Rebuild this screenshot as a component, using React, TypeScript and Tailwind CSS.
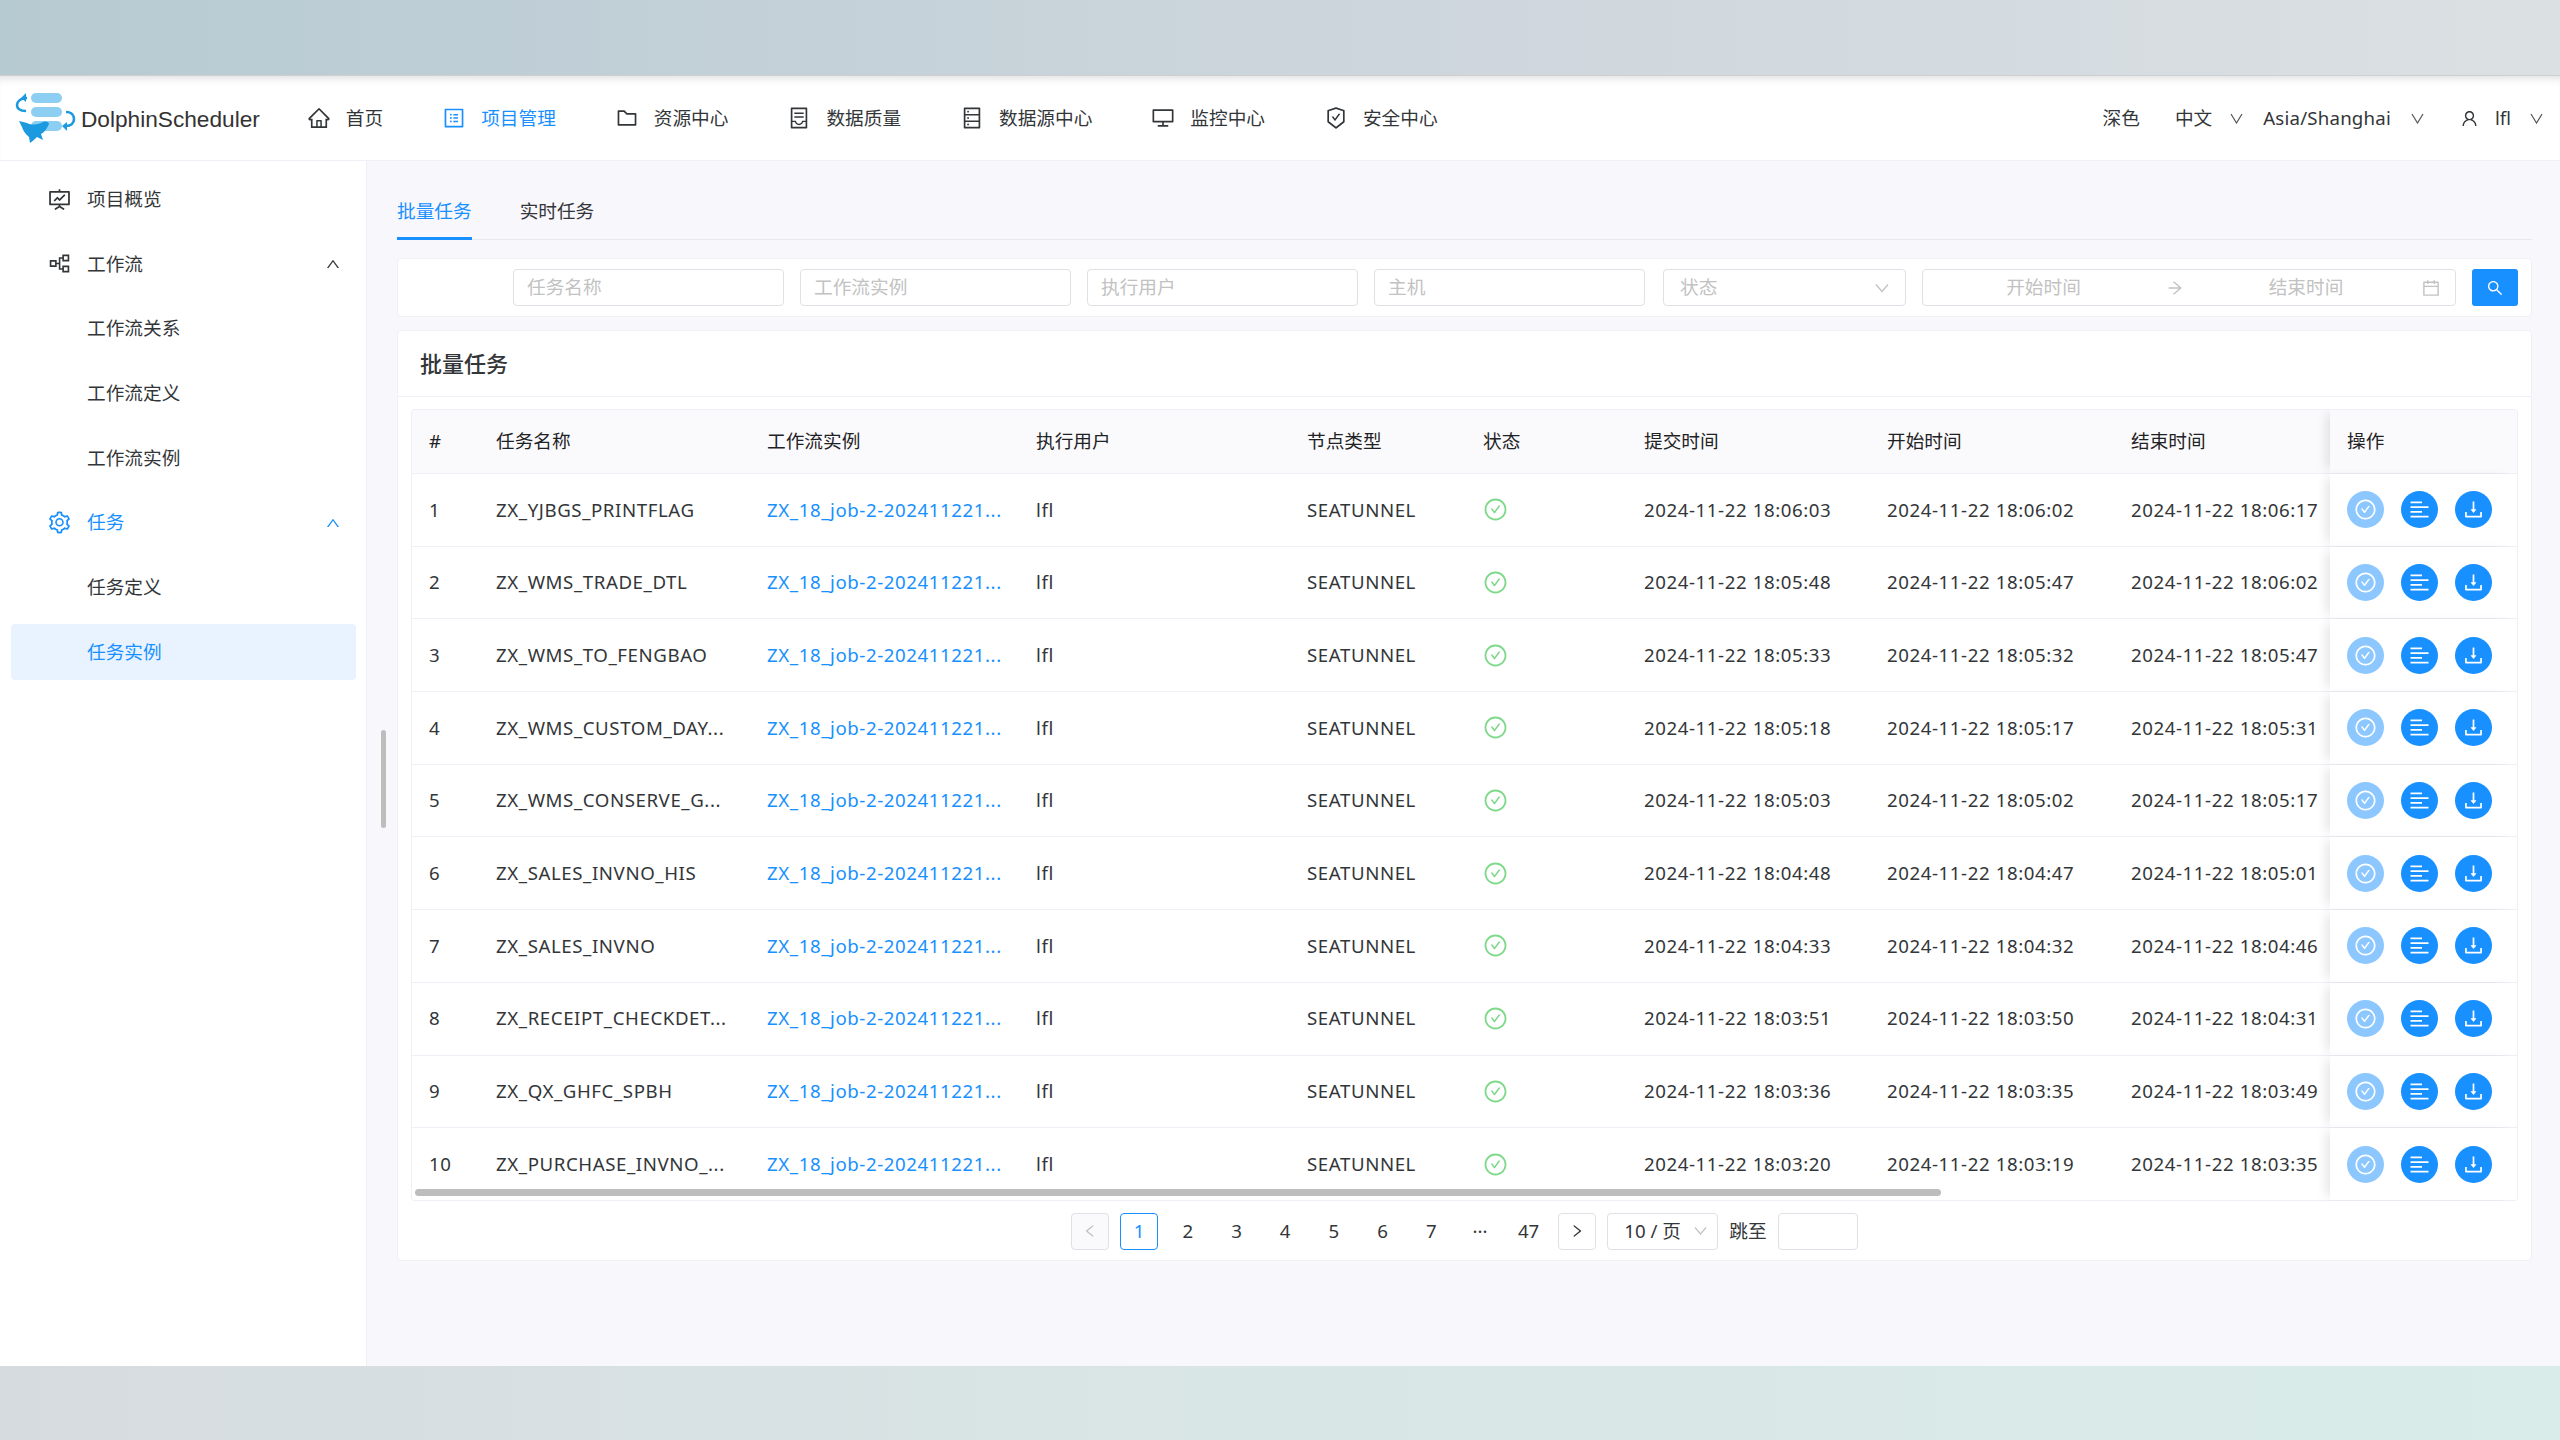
import type { ReactNode } from "react"
import {
  AiOutlineAlignLeft,
  AiOutlineArrowRight,
  AiOutlineCalendar,
  AiOutlineCheckCircle,
  AiOutlineContainer,
  AiOutlineDatabase,
  AiOutlineDesktop,
  AiOutlineDownload,
  AiOutlineFolder,
  AiOutlineFundProjectionScreen,
  AiOutlineHome,
  AiOutlineLeft,
  AiOutlinePartition,
  AiOutlineProfile,
  AiOutlineRight,
  AiOutlineSafetyCertificate,
  AiOutlineSearch,
  AiOutlineSetting,
  AiOutlineUp,
  AiOutlineUser,
} from "react-icons/ai"

const navItems = [
  { label: "首页", icon: <AiOutlineHome /> },
  { label: "项目管理", icon: <AiOutlineProfile />, active: true },
  { label: "资源中心", icon: <AiOutlineFolder /> },
  { label: "数据质量", icon: <AiOutlineContainer /> },
  { label: "数据源中心", icon: <AiOutlineDatabase /> },
  { label: "监控中心", icon: <AiOutlineDesktop /> },
  { label: "安全中心", icon: <AiOutlineSafetyCertificate /> },
]

const rows = [
  ["ZX_YJBGS_PRINTFLAG", "18:06:03", "18:06:02", "18:06:17"],
  ["ZX_WMS_TRADE_DTL", "18:05:48", "18:05:47", "18:06:02"],
  ["ZX_WMS_TO_FENGBAO", "18:05:33", "18:05:32", "18:05:47"],
  ["ZX_WMS_CUSTOM_DAY...", "18:05:18", "18:05:17", "18:05:31"],
  ["ZX_WMS_CONSERVE_G...", "18:05:03", "18:05:02", "18:05:17"],
  ["ZX_SALES_INVNO_HIS", "18:04:48", "18:04:47", "18:05:01"],
  ["ZX_SALES_INVNO", "18:04:33", "18:04:32", "18:04:46"],
  ["ZX_RECEIPT_CHECKDET...", "18:03:51", "18:03:50", "18:04:31"],
  ["ZX_QX_GHFC_SPBH", "18:03:36", "18:03:35", "18:03:49"],
  ["ZX_PURCHASE_INVNO_...", "18:03:20", "18:03:19", "18:03:35"],
]

const gridCols = "grid grid-cols-[67px_271px_269px_271px_176px_161px_243px_244px_216px_187px]"
const opShadow = "relative z-10 h-full pl-[17px] flex items-center shadow-[-8px_0_10px_-4px_rgba(0,0,0,0.1)]"

function Logo() {
  return (
    <svg width="64" height="54" viewBox="0 0 64 54" className="shrink-0">
      <rect x="17" y="2" width="31" height="10" rx="5" fill="#8ccff2" />
      <rect x="17" y="16" width="31" height="10" rx="5" fill="#8ccff2" />
      <rect x="17" y="30" width="31" height="10" rx="5" fill="#8ccff2" />
      <path d="M13 7 C6 7 3 11 3 14 C3 18 6 20 12 20" fill="none" stroke="#1b9ae0" strokeWidth="2.6" />
      <path d="M12 2 L7 7 L12 11 Z" fill="#1b9ae0" />
      <path d="M52 21 C58 21 60 25 60 28 C60 32 57 35 52 35" fill="none" stroke="#1b9ae0" strokeWidth="2.6" />
      <path d="M53 31 L48 35 L53 40 Z" fill="#1b9ae0" />
      <path
        d="M5 30 L13 32 C19 35 25 33 29 31 C32 30 35 31 35 33 C33 37 31 41 27 43 L29 49 L23 46 C21 48 19 50 16 52 L15 46 C11 43 9 39 8 36 Z"
        fill="#1b9ae0"
      />
    </svg>
  )
}

function Caret() {
  return (
    <svg width="13" height="11" viewBox="0 0 13 11" className="shrink-0">
      <path d="M1 1 L6.5 10 L12 1" fill="none" stroke="#555" strokeWidth="1.2" />
    </svg>
  )
}

function SideItem({ label, icon, open, active, blue }: { label: string; icon?: ReactNode; open?: boolean; active?: boolean; blue?: boolean }) {
  return (
    <div className={`ml-[11px] mr-[10px] flex h-[56.67px] items-center rounded-[4px] pl-[36px] pr-[16px] ${active ? "bg-[#e8f3ff]" : ""} ${active || blue ? "text-[#1890ff]" : "text-[#333639]"}`}>
      <span className="flex w-[40px] items-center text-[25px]">{icon}</span>
      <span>{label}</span>
      {open && <AiOutlineUp className={`ml-auto mr-[-1px] text-[16px] ${blue ? "text-[#1890ff]" : "text-[#333639]"}`} />}
    </div>
  )
}

function FilterInput({ text, className }: { text: string; className: string }) {
  return (
    <div className={`flex h-[37px] items-center rounded-[4px] border border-[#e0e0e6] px-[13px] text-[#c2c2c2] ${className}`}>{text}</div>
  )
}

function RoundButton({ children, light }: { children: ReactNode; light?: boolean }) {
  return (
    <span className={`flex h-[37px] w-[37px] items-center justify-center rounded-full text-[23px] text-white ${light ? "bg-[#8cc8ff]" : "bg-[#1890ff]"}`}>
      {children}
    </span>
  )
}

function PageBox({ children, className = "" }: { children: ReactNode; className?: string }) {
  return <div className={`flex h-[37px] w-[38px] items-center justify-center rounded-[4px] ${className}`}>{children}</div>
}

export default function App() {
  return (
    <div className="flex h-[1440px] w-[2560px] flex-col overflow-hidden bg-white font-['Noto_Sans','Noto_Sans_CJK_SC',sans-serif] text-[18.67px] leading-none text-[#333639]">
      <div className="h-[75px] shrink-0 bg-gradient-to-r from-[#b6cad2] via-[#ccd5dc] to-[#dbe0e3]" />

      <header className="flex h-[86px] shrink-0 items-center border-t border-b border-t-[#cfcfcf] border-b-[#efeff5] bg-white pl-[14px] pr-[17px] shadow-[inset_0_8px_8px_-6px_rgba(0,0,0,0.14)]">
        <Logo />
        <span className="ml-[3px] mt-[3px] font-['Liberation_Sans',sans-serif] text-[22.67px] text-[#333]">DolphinScheduler</span>
        <nav className="ml-[47px] flex items-center gap-[59px]">
          {navItems.map((item) => (
            <div key={item.label} className={`flex items-center gap-[15px] ${item.active ? "text-[#1890ff]" : ""}`}>
              <span className="text-[24px]">{item.icon}</span>
              <span>{item.label}</span>
            </div>
          ))}
        </nav>
        <div className="ml-auto flex items-center">
          <span>深色</span>
          <span className="ml-[35px]">中文</span>
          <span className="ml-[18px]"><Caret /></span>
          <span className="ml-[20px] tracking-[0.2px]">Asia/Shanghai</span>
          <span className="ml-[20px]"><Caret /></span>
          <AiOutlineUser className="ml-[36px] text-[19px]" />
          <span className="ml-[16px]">lfl</span>
          <span className="ml-[19px]"><Caret /></span>
        </div>
      </header>

      <div className="flex min-h-0 flex-1">
        <aside className="flex w-[367px] shrink-0 flex-col gap-[8px] border-r border-[#efeff5] bg-white pt-[10px]">
          <SideItem label="项目概览" icon={<AiOutlineFundProjectionScreen />} />
          <SideItem label="工作流" icon={<AiOutlinePartition />} open />
          <SideItem label="工作流关系" />
          <SideItem label="工作流定义" />
          <SideItem label="工作流实例" />
          <SideItem label="任务" icon={<AiOutlineSetting />} open blue />
          <SideItem label="任务定义" />
          <SideItem label="任务实例" active />
        </aside>

        <main className="relative min-w-0 flex-1 bg-[#f8f7fc] pl-[30px] pr-[28px]">
          <div className="absolute left-[14px] top-[569px] h-[98px] w-[5px] rounded-full bg-[#bdbdbd]" />

          <div className="mt-[31px] flex h-[48px] gap-[48px] border-b border-[#e8e8ee]">
            <div className="h-[48px] border-b-[3px] border-[#1890ff] pt-[10px] text-[#1890ff]">批量任务</div>
            <div className="pt-[10px]">实时任务</div>
          </div>

          <div className="mt-[18px] flex h-[59px] items-center justify-end gap-[16px] rounded-[4px] border border-[#f0f0f5] bg-white pr-[13px]">
            <FilterInput text="任务名称" className="w-[271px]" />
            <FilterInput text="工作流实例" className="w-[271px]" />
            <FilterInput text="执行用户" className="w-[271px]" />
            <FilterInput text="主机" className="mr-[2px] w-[271px]" />
            <div className="flex h-[37px] w-[243px] items-center justify-between rounded-[4px] border border-[#e0e0e6] px-[16px] text-[#c2c2c2]">
              <span>状态</span>
              <svg width="14" height="10" viewBox="0 0 14 10">
                <path d="M1 1.5 L7 8.5 L13 1.5" fill="none" stroke="#c2c2c2" strokeWidth="1.3" />
              </svg>
            </div>
            <div className="flex h-[37px] w-[534px] items-center rounded-[4px] border border-[#e0e0e6] text-[#c2c2c2]">
              <span className="w-[241px] text-center">开始时间</span>
              <AiOutlineArrowRight className="w-[22px] text-[18px]" />
              <span className="w-[240px] text-center">结束时间</span>
              <AiOutlineCalendar className="ml-[-5px] text-[20px]" />
            </div>
            <div className="flex h-[37px] w-[46px] items-center justify-center rounded-[3px] bg-[#1890ff] text-[18px] text-white">
              <AiOutlineSearch />
            </div>
          </div>

          <section className="mt-[13px] h-[931px] rounded-[4px] border border-[#f0f0f5] bg-white">
            <h2 className="flex h-[66px] items-center border-b border-[#efeff5] pb-[2px] pl-[22px] text-[22px] font-medium">批量任务</h2>

            <div className="relative mx-[13px] mt-[12px] overflow-hidden rounded-[4px] border-x border-t border-[#efeff5]">
              <div className={`${gridCols} h-[64px] items-center border-b border-[#efeff5] bg-[#fafafc] text-[#1f2225]`}>
                <span className="pl-[17px]">#</span>
                <span className="pl-[17px]">任务名称</span>
                <span className="pl-[17px]">工作流实例</span>
                <span className="pl-[17px]">执行用户</span>
                <span className="pl-[17px]">节点类型</span>
                <span className="pl-[17px]">状态</span>
                <span className="pl-[17px]">提交时间</span>
                <span className="pl-[17px]">开始时间</span>
                <span className="pl-[17px]">结束时间</span>
                <span className={`${opShadow} bg-[#fafafc]`}>操作</span>
              </div>

              {rows.map((row, i) => (
                <div key={row[0]} className={`${gridCols} h-[72.7px] items-center border-b border-[#efeff5] bg-white tracking-[0.58px]`}>
                  <span className="pl-[17px]">{i + 1}</span>
                  <span className="pl-[17px]">{row[0]}</span>
                  <span className="pl-[17px] text-[#1890ff]">ZX_18_job-2-202411221...</span>
                  <span className="pl-[17px]">lfl</span>
                  <span className="pl-[17px]">SEATUNNEL</span>
                  <span className="pl-[17px]"><AiOutlineCheckCircle className="text-[25px] text-[#7fd98a]" /></span>
                  <span className="pl-[17px]">2024-11-22 {row[1]}</span>
                  <span className="pl-[17px]">2024-11-22 {row[2]}</span>
                  <span className="pl-[17px]">2024-11-22 {row[3]}</span>
                  <div className={`${opShadow} gap-[17px] bg-white`}>
                    <RoundButton light><AiOutlineCheckCircle /></RoundButton>
                    <RoundButton><AiOutlineAlignLeft /></RoundButton>
                    <RoundButton><AiOutlineDownload /></RoundButton>
                  </div>
                </div>
              ))}

              <div className="absolute bottom-[5px] left-[3px] z-20 h-[7px] w-[1526px] rounded-full bg-[#bdbdbd]" />
            </div>

            <div className="mt-[12px] flex items-center justify-center">
              <div className="flex items-center gap-[10.7px]">
                <PageBox className="w-[37px] border border-[#e0e0e6] bg-[#fafafc] text-[#c2c2c2]"><AiOutlineLeft className="text-[16px]" /></PageBox>
                <PageBox className="border border-[#1890ff] text-[#1890ff]">1</PageBox>
                {["2", "3", "4", "5", "6", "7", "···", "47"].map((p) => (
                  <PageBox key={p}>{p}</PageBox>
                ))}
                <PageBox className="w-[37px] border border-[#e0e0e6]"><AiOutlineRight className="text-[16px]" /></PageBox>
              </div>
              <div className="ml-[11px] flex h-[37px] w-[111px] items-center justify-between rounded-[4px] border border-[#e0e0e6] pl-[16px] pr-[16px]">
                <span>10 / 页</span>
                <svg width="13" height="10" viewBox="0 0 13 10" className="mr-[-6px]">
                  <path d="M1 1.5 L6.5 8 L12 1.5" fill="none" stroke="#c2c2c2" strokeWidth="1.2" />
                </svg>
              </div>
              <span className="ml-[11px]">跳至</span>
              <div className="ml-[11px] h-[37px] w-[80px] rounded-[4px] border border-[#e0e0e6]" />
            </div>
          </section>
        </main>
      </div>

      <div className="h-[74px] shrink-0 bg-gradient-to-r from-[#d6dbe0] via-[#d9e6e6] to-[#d9ece9]" />
    </div>
  )
}
